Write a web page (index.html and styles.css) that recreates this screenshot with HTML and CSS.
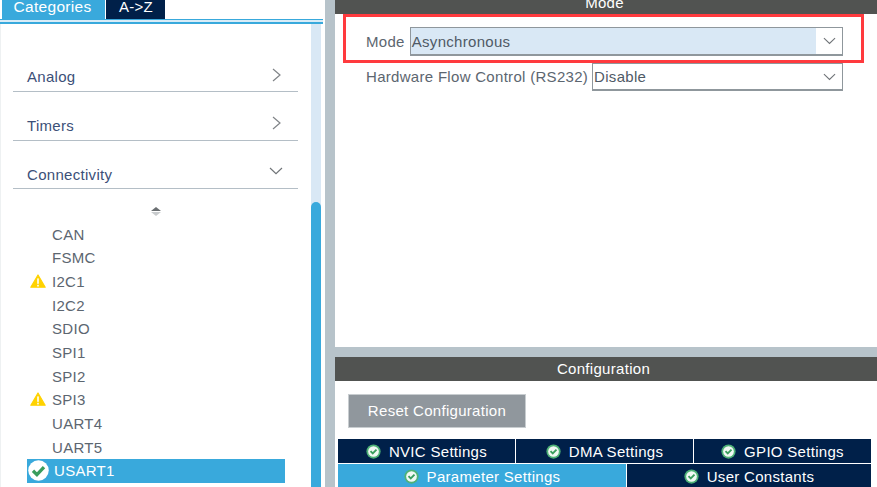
FILE: index.html
```html
<!DOCTYPE html>
<html lang="en">
<head>
<meta charset="utf-8">
<title>USART1 Configuration</title>
<link rel="stylesheet" href="styles.css">
</head>
<body>
<svg class="defs" width="0" height="0" aria-hidden="true">
  <symbol id="ok" viewBox="0 0 16 16">
    <circle cx="8" cy="8" r="7.8" fill="#fff"/>
    <path d="M3.8 8.2 6.8 11.2 12.2 5.4" fill="none" stroke="#3a9d5d" stroke-width="2.5"/>
  </symbol>
  <symbol id="oks" viewBox="0 0 16 16">
    <circle cx="8" cy="8" r="7.6" fill="#4fb277"/>
    <circle cx="8" cy="8" r="5.7" fill="#f2f8f4"/>
    <path d="M4.8 7.6 7.2 10 11.2 6" fill="none" stroke="#3a9d5d" stroke-width="2"/>
  </symbol>
  <symbol id="warn" viewBox="0 0 16 14">
    <path d="M8 1 15.2 13.2H0.8Z" fill="#ffd200" stroke="#ffd200" stroke-width="1.2" stroke-linejoin="round"/>
    <rect x="7.2" y="4.4" width="1.6" height="5.4" fill="#fff"/>
    <rect x="7.2" y="10.8" width="1.6" height="1.7" fill="#fff"/>
  </symbol>
  <symbol id="right" viewBox="0 0 9 14">
    <path d="M1 1l7 6-7 6" fill="none" stroke="#808488" stroke-width="1.2"/>
  </symbol>
  <symbol id="down" viewBox="0 0 14 8">
    <path d="M1 1l6 5.6L13 1" fill="none" stroke="#707478" stroke-width="1.2"/>
  </symbol>
</svg>
<main class="app">
  <aside class="left">
    <nav class="tabs">
      <span class="tab tab-on">Categories</span>
      <span class="tab tab-off">A-&gt;Z</span>
    </nav>
    <div class="rule"></div>
    <div class="left-body">
      <div class="tree">
        <div class="cat"><span>Analog</span><svg class="ico-right"><use href="#right"/></svg></div>
        <div class="cat"><span>Timers</span><svg class="ico-right"><use href="#right"/></svg></div>
        <div class="cat"><span>Connectivity</span><svg class="ico-down"><use href="#down"/></svg></div>
        <div class="sorter"><i class="up"></i><i class="dn"></i></div>
        <ul class="list">
          <li class="item">CAN</li>
          <li class="item">FSMC</li>
          <li class="item"><svg class="ico-warn"><use href="#warn"/></svg>I2C1</li>
          <li class="item">I2C2</li>
          <li class="item">SDIO</li>
          <li class="item">SPI1</li>
          <li class="item">SPI2</li>
          <li class="item"><svg class="ico-warn"><use href="#warn"/></svg>SPI3</li>
          <li class="item">UART4</li>
          <li class="item">UART5</li>
          <li class="item item-on"><svg class="ico-ok"><use href="#ok"/></svg>USART1</li>
        </ul>
      </div>
      <div class="scroll"><div class="thumb"></div></div>
    </div>
  </aside>
  <section class="right">
    <div class="pane-mode">
      <h2 class="head head-mode">Mode</h2>
      <div class="form">
        <div class="row row-a">
          <label class="lbl">Mode</label>
          <div class="sel sel-hi"><span class="val">Asynchronous</span><span class="arrow"><svg class="ico-down"><use href="#down"/></svg></span></div>
        </div>
        <div class="row row-b">
          <label class="lbl">Hardware Flow Control (RS232)</label>
          <div class="sel"><span class="val">Disable</span><span class="arrow"><svg class="ico-down"><use href="#down"/></svg></span></div>
        </div>
        <div class="red"></div>
      </div>
    </div>
    <div class="pane-conf">
      <h2 class="head head-conf">Configuration</h2>
      <button class="reset" type="button">Reset Configuration</button>
      <div class="ctabs ctabs-3">
        <span class="ctab"><svg class="ico-small"><use href="#oks"/></svg>NVIC Settings</span>
        <span class="ctab"><svg class="ico-small"><use href="#oks"/></svg>DMA Settings</span>
        <span class="ctab"><svg class="ico-small"><use href="#oks"/></svg>GPIO Settings</span>
      </div>
      <div class="ctabs ctabs-2">
        <span class="ctab ctab-on"><svg class="ico-small"><use href="#oks"/></svg>Parameter Settings</span>
        <span class="ctab"><svg class="ico-small"><use href="#oks"/></svg>User Constants</span>
      </div>
    </div>
  </section>
</main>
</body>
</html>
```
FILE: styles.css
```css
* { box-sizing: border-box; }
html, body { margin: 0; padding: 0; }
body {
  width: 877px;
  height: 487px;
  overflow: hidden;
  background: #fff;
  font-family: "Liberation Sans", Arial, sans-serif;
  font-size: 15px;
  letter-spacing: 0.3px;
  color: #5c6670;
}
.defs { position: absolute; }
.app { display: flex; width: 877px; height: 487px; }

/* left column */
.left { width: 325px; height: 487px; flex: none; display: flex; flex-direction: column; }
.tabs { display: flex; height: 19px; padding-left: 2px; gap: 1px; flex: none; }
.tab {
  height: 19px;
  line-height: 13px;
  color: #fff;
  text-align: center;
  font-size: 15.5px;
}
.tab-on { width: 103px; background: #39a9dc; padding-right: 2px; }
.tab-off { width: 59px; background: #002049; font-size: 15px; padding-left: 1px; }
.rule {
  height: 5px;
  flex: none;
  border-top: 1px solid #39a9dc;
  border-bottom: 2px solid #39a9dc;
  margin-right: 2px;
  background: #d9ecf7;
}
.left-body {
  flex: 1;
  display: flex;
  min-height: 0;
  border-left: 1px solid #eef1f2;
}
.tree { width: 310px; flex: none; padding: 0 0 0 12px; }
.cat {
  width: 285px;
  height: 48.6px;
  display: flex;
  align-items: flex-end;
  justify-content: space-between;
  border-bottom: 1px solid #b4bec6;
  padding: 0 17px 5.6px 14px;
  color: #3c5078;
}
.cat:first-child { height: 68px; }
.ico-right { width: 9px; height: 14px; margin-bottom: 3.6px; }
.cat .ico-down { width: 14px; height: 8px; margin: 0 -2px 7.6px 0; }
.sorter { height: 33.4px; display: flex; flex-direction: column; align-items: center; padding: 18px 0 0 0; width: 285px; }
.up { width: 0; height: 0; border: 5.5px solid transparent; border-top: 0; border-bottom: 4.5px solid #6b6f72; }
.dn { width: 0; height: 0; border: 5.5px solid transparent; border-bottom: 0; border-top: 4px solid #c8cbcd; margin-top: 1px; }
.list { list-style: none; margin: 0; padding: 0 0 0 14px; }
.item {
  position: relative;
  height: 23.7px;
  line-height: 23.7px;
  padding-left: 25px;
  width: 258px;
  color: #5c6670;
}
.item-on { background: #39a9dc; color: #fff; padding-left: 27px; }
.ico-warn { position: absolute; left: 3px; top: 4px; width: 16px; height: 14px; }
.ico-ok { position: absolute; left: 1px; top: 1px; width: 21px; height: 21px; }
.scroll { width: 10px; flex: none; background: #d9e8f5; }
.thumb { margin-top: 178px; height: 300px; background: #39a9dc; border-radius: 5px 5px 0 0; }

/* right column */
.right {
  flex: 1;
  display: flex;
  flex-direction: column;
  border-left: 10px solid #b7c3ca;
  background: #b7c3ca;
}
.head {
  margin: 0;
  background: #515351;
  color: #fff;
  font-weight: normal;
  font-size: 15px;
  text-align: center;
  padding-right: 5px;
}
.pane-mode { height: 347px; background: #fff; display: flex; flex-direction: column; flex: none; margin-bottom: 10px; }
.head-mode { height: 14px; line-height: 6px; flex: none; overflow: hidden; padding-right: 3px; }
.form { position: relative; padding: 13px 34px 0 31px; }
.row { display: flex; align-items: stretch; }
.row-a { height: 29px; }
.row-b { height: 28px; margin-top: 7px; }
.lbl { line-height: 28px; margin-right: 4px; color: #5c6670; white-space: nowrap; }
.row-a .lbl { line-height: 29px; margin-right: 5px; }
.sel {
  flex: 1;
  display: flex;
  border: 1px solid #8f979c;
  border-bottom-width: 2px;
  background: #fff;
  line-height: 26px;
  color: #4f5a66;
}
.row-a .sel { line-height: 27px; }
.sel-hi .val { background: #d9e8f5; }
.val { flex: 1; padding-left: 1px; }
.arrow { width: 26px; display: flex; align-items: center; justify-content: center; }
.arrow .ico-down { width: 13px; height: 8px; }
.red {
  position: absolute;
  left: 8px;
  top: 0;
  width: 521px;
  height: 49px;
  border: 3px solid #ff3a3e;
}

.pane-conf { flex: 1; background: #fff; min-height: 0; display: flex; flex-direction: column; }
.head-conf { height: 24px; line-height: 24px; flex: none; }
.reset {
  width: 178px;
  height: 34px;
  margin: 13px 0 11px 13px;
  background: #90979d;
  border: 1px solid #c8cdd0;
  color: #fff;
  font: 15px/32px "Liberation Sans", Arial, sans-serif;
  letter-spacing: 0.3px;
  padding: 0;
  flex: none;
}
.ctabs { display: flex; gap: 1px; margin: 0 6px 1px 3px; height: 24px; flex: none; }
.ctab {
  flex: 1;
  background: #002049;
  color: #fff;
  display: flex;
  align-items: center;
  justify-content: center;
  gap: 8px;
  white-space: nowrap;
}
.ctab-on { background: #39a9dc; flex: none; width: 288px; }
.ico-small { width: 15px; height: 15px; }
```
